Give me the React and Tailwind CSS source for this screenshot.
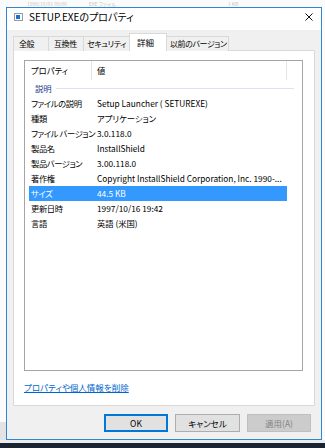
import React from 'react';

const tabs = [
  { label: '全般', w: 'w-[36px]', pl: 'pl-[5px]' },
  { label: '互換性', w: 'w-[36px]', pl: 'pl-[5px]' },
  { label: 'セキュリティ', w: 'w-[47px]', pl: 'pl-[3px]' },
  { label: '詳細', w: 'w-[38px]', pl: 'pl-[7px]', active: true },
  { label: '以前のバージョン', w: 'w-[63px]', pl: 'pl-[3px]' },
];

const rows = [
  ['ファイルの説明', 'Setup Launcher ( SETUREXE)'],
  ['種類', 'アプリケーション'],
  ['ファイル バージョン', '3.0.118.0'],
  ['製品名', 'InstallShield'],
  ['製品バージョン', '3.00.118.0'],
  ['著作権', 'Copyright InstallShield Corporation, Inc. 1990-...'],
  ['サイズ', '44.5 KB', true],
  ['更新日時', '1997/10/16 19:42'],
  ['言語', '英語 (米国)'],
];

const FileIcon = () => (
  <svg width="9" height="8" viewBox="0 0 9 8">
    <rect x="0.5" y="0.5" width="8" height="7" fill="#fff" stroke="#8a9bb0" />
    <rect x="2" y="2" width="4" height="4" fill="#1f6fd1" />
  </svg>
);

const CloseIcon = () => (
  <svg width="8" height="8" viewBox="0 0 8 8">
    <path d="M0.5 0.5 L7.5 7.5 M7.5 0.5 L0.5 7.5" stroke="#111" strokeWidth="1" />
  </svg>
);

export default function App() {
  return (
    <div className="w-[325px] h-[448px] bg-[#fbfbfb] flex flex-col overflow-hidden text-black font-['Noto_Sans_CJK_JP',sans-serif] [font-feature-settings:'palt']">
      {/* window behind */}
      <div className="h-[7px] flex items-center pl-[27px] gap-[22px] text-[5px] leading-[6px] text-[#c8c8c8]">
        <span className="whitespace-nowrap">1998/10/01 09:00</span>
        <span className="whitespace-nowrap">EXE ファイル</span>
        <span className="ml-[90px] whitespace-nowrap">1 KB</span>
      </div>

      <div className="flex h-[433px]">
        <div className="w-[6px] flex flex-col justify-end">
          <div className="h-[18px] bg-[#e3e3e3]" />
        </div>

        {/* dialog */}
        <div className="w-[316px] border border-[#2f86d6] flex flex-col bg-[#f0f0f0]">
          <div className="h-[22px] bg-white flex items-start pt-[5px] pl-[7px] pr-[8px]">
            <FileIcon />
            <span className="ml-[6px] text-[10px] leading-[10px] mt-[-1px]">SETUP.EXEのプロパティ</span>
            <span className="ml-auto"><CloseIcon /></span>
          </div>

          <div className="flex-1 flex flex-col pt-[4px] px-[6px]">
            <div className="flex items-end h-[17px] relative z-10 -mb-px">
              {tabs.map((t) =>
                t.active ? (
                  <div key={t.label} className={`${t.w} ${t.pl} h-[18px] bg-white border border-b-0 border-[#d9d9d9] -ml-px pt-[2px] text-[8.5px] leading-[12px] whitespace-nowrap`}>
                    {t.label}
                  </div>
                ) : (
                  <div key={t.label} className={`${t.w} ${t.pl} h-[15px] bg-[#f0f0f0] border border-b-0 border-[#d9d9d9] -ml-px first:ml-0 pt-[1px] text-[8px] leading-[12px] tracking-[-0.4px] whitespace-nowrap`}>
                    {t.label}
                  </div>
                )
              )}
            </div>

            <div className="w-[302px] h-[356px] bg-white border border-[#d9d9d9] pt-[9px] pl-[10px] flex flex-col">
              <div className="w-[279px] h-[311px] border border-[#a5a5a5] flex flex-col text-[8.3px]">
                <div className="h-[19px] flex items-center">
                  <div className="w-[67px] h-full pl-[6px] flex items-center border-r border-[#e5e5e5]">プロパティ</div>
                  <div className="w-[195px] h-full pl-[5px] flex items-center border-r border-[#e5e5e5]">値</div>
                </div>
                <div className="h-[16px] flex items-center pl-[10px] pr-[8px]">
                  <span className="text-[#1b3a8a]">説明</span>
                  <div className="flex-1 h-px bg-[#dde3ee] ml-[4px]" />
                </div>
                {rows.map(([k, v, sel]) => (
                  <div
                    key={k}
                    className={`h-[15px] ml-[4px] w-[258px] flex items-center ${sel ? 'bg-[#3399ff] text-white' : ''}`}
                  >
                    <span className="w-[68px] shrink-0 pl-[2px] whitespace-nowrap tracking-[-0.4px]">{k}</span>
                    <span className="whitespace-nowrap">{v}</span>
                  </div>
                ))}
              </div>
              <div className="mt-[10px] text-[8.5px] leading-[12px] text-[#0066cc] underline">プロパティや個人情報を削除</div>
            </div>

            <div className="flex justify-end gap-[7px] mt-[8px] pr-[4px] text-[8.5px]">
              <div className="w-[64px] h-[18px] bg-[#e1e1e1] border border-[#0078d7] shadow-[inset_0_0_0_1px_#0078d7] flex items-center justify-center">OK</div>
              <div className="w-[65px] h-[18px] bg-[#e1e1e1] border border-[#adadad] flex items-center justify-center">キャンセル</div>
              <div className="w-[64px] h-[18px] bg-[#cccccc] border border-[#bfbfbf] text-[#838383] flex items-center justify-center">適用(A)</div>
            </div>
          </div>
        </div>

        <div className="flex-1" />
      </div>

      <div className="h-[3px] bg-[#ececec]" />
      <div className="flex-1 bg-[#1b2433]" />
    </div>
  );
}
